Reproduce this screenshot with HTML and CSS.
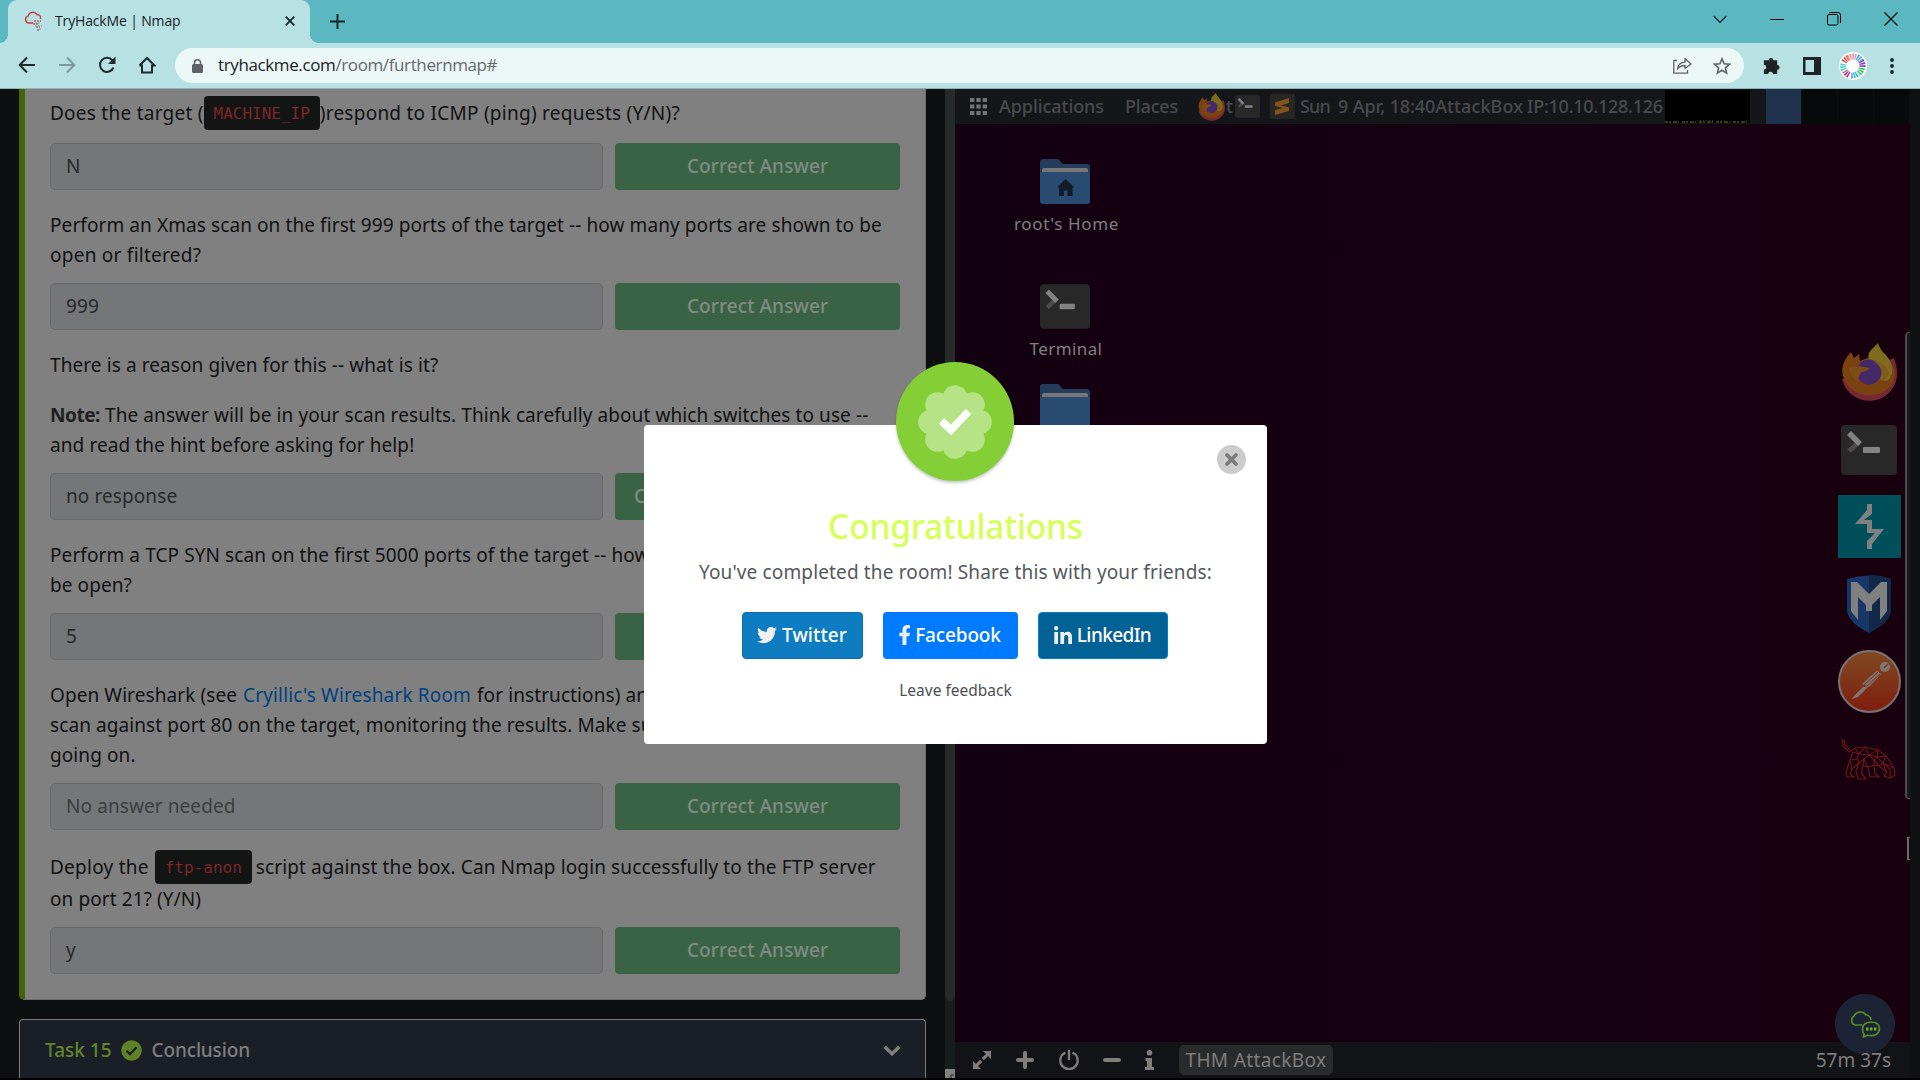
FILE: index.html
```html
<!DOCTYPE html>
<html lang="en">
<head>
<meta charset="utf-8">
<title>TryHackMe | Nmap</title>
<link rel="stylesheet" href="styles.css">
</head>
<body>
<svg class="defs" width="0" height="0">
  <defs>
    <linearGradient id="post" x1="0" y1="0" x2="0" y2="1"><stop offset="0" stop-color="#7f4a22"/><stop offset="1" stop-color="#7f1d0d"/></linearGradient>
    <symbol id="firefox" viewBox="0 0 56 58">
      <path d="M53 15Q57 26 56 34A28 28 0 0 1 1 36Z" fill="#752834"/>
      <path d="M1 27Q2 17 10 9L13 15L18 11L19 18Q39 8 51 21Q57 34 50 43Q39 54 24 52Q3 48 1 27Z" fill="#7a4211"/>
      <path d="M28 17Q26 10 31 6L37 0Q39 7 45 12Q53 21 51 31Q46 43 38 34L36 20Z" fill="#7e6b1c"/>
      <circle cx="28" cy="29" r="12.500" fill="#45286a"/>
      <path d="M32 18Q40 22 41 30Q41 36 38 38Q46 38 48 30Q46 20 32 18Z" fill="#7e5d1a"/>
      <path d="M8 25Q17 22 29 25Q25 29 21 29Q17 32 17 39Q10 35 8 25Z" fill="#7e4d16"/>
    </symbol>
    <symbol id="terminal" viewBox="0 0 56 50">
      <rect width="56" height="50" rx="4" fill="#282828"/>
      <path d="M8 26L17 18" stroke="#4b4b4b" stroke-width="5"/>
      <path d="M8 8L19 19" stroke="#838383" stroke-width="5.500"/>
      <rect x="22" y="22" width="17" height="6" rx="1" fill="#838383"/>
    </symbol>
    <symbol id="folder" viewBox="0 0 50 45">
      <path d="M0 3Q0 0 3 0H17Q19 0 20 2L23 5H47Q50 5 50 8V30H0Z" fill="#243d5d"/>
      <path d="M2 13V11Q2 9 4 9H46Q48 9 48 11V14H2Z" fill="#777"/>
      <path d="M0 13H50V42Q50 45 47 45H3Q0 45 0 42Z" fill="#294b72"/>
    </symbol>
  </defs>
</svg>

<header class="tabs">
  <div class="tab">
    <svg class="favicon" viewBox="0 0 21 21" width="21" height="21"><path d="M9 12H4.500A3.500 3.500 0 0 1 4 5.200A5 5 0 0 1 13 3.500A3.500 3.500 0 0 1 16.500 8" fill="none" stroke="#c8393f" stroke-width="1.400"/><path d="M10 10h7M9 13h5M12 16h4M13 19h3" stroke="#c55a60" stroke-width="1.500" stroke-dasharray="2 1"/><path d="M11 12h6M11 15h7M15 18h3" stroke="#8a8f93" stroke-width="1.200" stroke-dasharray="2 1"/></svg>
    <span class="tab-title">TryHackMe | Nmap</span>
    <svg class="tab-x" viewBox="0 0 10 10" width="10" height="10"><path d="M.7.700l8.600 8.600M9.300.700L.7 9.300" stroke="#16282a" stroke-width="1.800"/></svg>
  </div>
  <svg class="newtab" viewBox="0 0 15 15" width="15" height="15"><path d="M7.500 0v15M0 7.500h15" stroke="#16282a" stroke-width="2"/></svg>
  <div class="winbtns">
    <svg viewBox="0 0 14 14" width="14" height="14"><path d="M.7 4l6.300 6.500L13.300 4" fill="none" stroke="#0c1c1e" stroke-width="1.200"/></svg>
    <svg viewBox="0 0 14 14" width="14" height="14"><path d="M0 7.500h14" stroke="#000" stroke-width="1"/></svg>
    <svg viewBox="0 0 14 14" width="14" height="14"><rect x=".5" y="2.500" width="10.500" height="10.500" rx="1.500" fill="none" stroke="#000"/><path d="M2.500.5H11Q13.500.5 13.500 3V11" fill="none" stroke="#000"/></svg>
    <svg viewBox="0 0 14 14" width="14" height="14"><path d="M.5.500l13 13M13.500.500l-13 13" stroke="#000" stroke-width="1.100"/></svg>
  </div>
</header>

<div class="toolbar">
  <svg class="nav" viewBox="0 0 18 18" width="18" height="18"><path d="M17 9H2M9 1.500L1.700 9L9 16.500" fill="none" stroke="#1d2a2c" stroke-width="2"/></svg>
  <svg class="nav" viewBox="0 0 18 18" width="18" height="18"><path d="M1 9H16M9 1.500L16.300 9L9 16.500" fill="none" stroke="#7c9a9d" stroke-width="2"/></svg>
  <svg class="nav" viewBox="0 0 18 18" width="18" height="18"><path d="M15.500 11.500A7 7 0 1 1 14.500 4.500" fill="none" stroke="#1d2a2c" stroke-width="2"/><path d="M17.500.5V8H10Z" fill="#1d2a2c"/></svg>
  <svg class="nav" viewBox="0 0 18 18" width="18" height="18"><path d="M4 8.500V16.500H14V8.500M1.500 9.500L9 2L16.500 9.500H14M4 9.500H1.500" fill="none" stroke="#1d2a2c" stroke-width="2"/></svg>
  <div class="url">
    <svg class="lock" viewBox="0 0 11 14" width="11" height="14"><rect y="5" width="11" height="9" rx="1.500" fill="#5f6368"/><path d="M2.500 6V3.800a3 3 0 0 1 6 0V6" fill="none" stroke="#5f6368" stroke-width="1.600"/></svg>
    <span class="address">tryhackme.com<span class="path">/room/furthernmap#</span></span>
    <svg class="share" viewBox="0 0 19 17" width="19" height="17"><path d="M4 3.500H.8V16.200H14.500V13" fill="none" stroke="#5f6368" stroke-width="1.300"/><path d="M4.500 12Q5.500 5.500 12 5.200V1.500L18 7L12 11.500V8.500Q7 8.500 4.500 12Z" fill="none" stroke="#5f6368" stroke-width="1.300" stroke-linejoin="round"/></svg>
    <svg viewBox="0 0 18 18" width="18" height="18"><path d="M9 1.800l2.100 5 5.400.4-4.100 3.600 1.200 5.300L9 13.300l-4.600 2.800 1.200-5.300L1.500 7.200l5.400-.4z" fill="none" stroke="#5f6368" stroke-width="1.600"/></svg>
  </div>
  <svg class="puzzle" viewBox="0 0 20 20" width="19" height="19"><path d="M2 4.500H7A2.500 2.500 0 1 1 12 4.500H16V9.500A2.500 2.500 0 1 1 16 14.500V19H11.500A2.500 2.500 0 0 0 6.500 19H2V14.300A2.500 2.500 0 0 0 2 9.300Z" fill="#1d2326"/></svg>
  <svg class="panel" viewBox="0 0 18 18" width="18" height="18"><path d="M0 0H18V18H0ZM2.500 3V15H11V3Z" fill="#1d2326" fill-rule="evenodd"/></svg>
  <svg class="avatar" viewBox="0 0 28 28" width="28" height="28"><circle cx="14" cy="14" r="14" fill="#fff"/><g fill="none" stroke-width="6" stroke-dasharray="1.500 .8"><path d="M9 6A9.500 9.500 0 0 1 17 5" stroke="#eb90a5"/><path d="M18 5A9.500 9.500 0 0 1 22 9" stroke="#4ba5dc"/><path d="M22 9A9.500 9.500 0 0 1 23.500 15" stroke="#7d3cc0"/><path d="M23 16A9.500 9.500 0 0 1 19 22" stroke="#35c46d"/><path d="M18 22A9.500 9.500 0 0 1 12 23.500" stroke="#3bafe0"/><path d="M10 23A9.500 9.500 0 0 1 6 19" stroke="#b13a91"/><path d="M5 18A9.500 9.500 0 0 1 4.500 12" stroke="#47d4c2"/><path d="M5 10A9.500 9.500 0 0 1 9 6" stroke="#dd503d"/></g></svg>
  <svg viewBox="0 0 4 16" width="4" height="16"><circle cx="2" cy="2" r="1.900" fill="#1d2326"/><circle cx="2" cy="8" r="1.900" fill="#1d2326"/><circle cx="2" cy="14" r="1.900" fill="#1d2326"/></svg>
</div>

<main class="split">
  <section class="room">
    <div class="room-body">
      <article class="task">
        <p class="line tall"><span class="loose">Does the target (</span><code>MACHINE_IP</code><span class="loose">)respond to ICMP (ping) requests (Y/N)?</span></p>
        <div class="answer"><div class="field">N</div><div class="correct">Correct Answer</div></div>
        <p class="line">Perform an Xmas scan on the first 999 ports of the target -- how many ports are shown to be</p>
        <p class="line"><span class="loose">open or filtered?</span></p>
        <div class="answer"><div class="field">999</div><div class="correct">Correct Answer</div></div>
        <p class="line para">There is a reason given for this -- what is it?</p>
        <p class="line"><b>Note:</b><span>The answer will be in your scan results. Think carefully about which switches to use --</span></p>
        <p class="line">and read the hint before asking for help!</p>
        <div class="answer"><div class="field">no response</div><div class="correct with-hint">Correct Answer</div></div>
        <p class="line">Perform a TCP SYN scan on the first 5000 ports of the target -- how</p>
        <p class="line">be open?</p>
        <div class="answer"><div class="field">5</div><div class="correct"></div></div>
        <p class="line"><span>Open Wireshark (see</span><a>Cryillic's Wireshark Room</a><span>for instructions) and</span></p>
        <p class="line">scan against port 80 on the target, monitoring the results. Make sure</p>
        <p class="line">going on.</p>
        <div class="answer"><div class="field none">No answer needed</div><div class="correct">Correct Answer</div></div>
        <p class="line tall"><span class="loose">Deploy the</span><code class="ftp">ftp-anon</code><span class="script">script against the box. Can Nmap login successfully to the FTP server</span></p>
        <p class="line">on port 21? (Y/N)</p>
        <div class="answer"><div class="field">y</div><div class="correct">Correct Answer</div></div>
      </article>
      <article class="next">
        <span class="num">Task 15</span>
        <svg class="done" viewBox="0 0 21 21" width="21" height="21"><circle cx="10.500" cy="10.500" r="10.300" fill="#5f8224"/><path d="M5.500 10.700l3.500 3.500 6.500-7" fill="none" stroke="#1a1e27" stroke-width="2.300"/></svg>
        <span class="name">Conclusion</span>
        <svg class="chev" viewBox="0 0 18 11" width="18" height="11"><path d="M1.700 1.700L9 8.800L16.300 1.700" fill="none" stroke="#807f7f" stroke-width="3.400"/></svg>
      </article>
    </div>
    <div class="scroll"><div class="thumb"></div><svg viewBox="0 0 10 9" width="10" height="9"><rect width="10" height="9" fill="#808080"/><path d="M6 9V6H9M4 9h1" stroke="#222" fill="none"/></svg></div>
  </section>

  <section class="vm">
    <div class="gnome">
      <svg class="grid" viewBox="0 0 17 17" width="17" height="17"><path d="M0 2H17M0 8.500H17M0 15H17" stroke="#727476" stroke-width="4.200" stroke-dasharray="4.300 2.050"/></svg>
      <span class="apps">Applications</span><span class="places">Places</span>
      <svg class="ff" width="27" height="28"><use href="#firefox"/></svg><span class="tt">t</span>
      <svg class="tm" width="25" height="23"><use href="#terminal"/></svg>
      <svg class="sub" viewBox="0 0 25 25" width="25" height="25"><rect width="25" height="25" rx="1" fill="#282623"/><path d="M5 8.500L19 4V9L11 11.500L19 13.500V17L5 21V16L13 14L5 12Z" fill="#80531c"/></svg>
      <span class="sun">Sun</span><span class="date">9 Apr, 18:40</span><span class="box">AttackBox</span><span class="ip">IP:10.10.128.126</span>
      <svg class="graph" viewBox="0 0 85 33" width="85" height="33"><rect width="85" height="33" fill="#000"/><path d="M0 32h85" stroke="#2c4312" stroke-width="2" stroke-dasharray="3 1 2 2 4 1 1 3"/><path d="M32 30.500h18M56 30.500h4" stroke="#263d10" stroke-dasharray="1 2"/></svg>
      <div class="workspaces"><i></i><i></i><i></i><i></i></div>
    </div>
    <div class="desktop">
      <div class="shortcuts">
        <svg viewBox="0 0 50 45" width="50" height="45"><use href="#folder"/><path d="M25.500 20L17 28.500H19V37H24V31.500H27.500V37H32.500V28.500H34.500Z" fill="#101c2a"/></svg>
        <span class="home">root's Home</span>
        <svg class="term" width="50" height="45"><use href="#terminal"/></svg>
        <span class="tlabel">Terminal</span>
        <svg class="dir" width="50" height="45"><use href="#folder"/></svg>
      </div>
      <div class="dock">
        <svg width="56" height="58"><use href="#firefox"/></svg>
        <svg class="k2" width="56" height="50"><use href="#terminal"/></svg>
        <svg class="k3" viewBox="0 0 63 63" width="63" height="63"><rect width="63" height="63" fill="#004f5a"/><path d="M29 9H34V19L26 25H34V34H46L34 49V54H29V46L37 38H29V29H17L29 15Z" fill="#7e8182"/></svg>
        <svg class="k4" viewBox="0 0 44 58" width="44" height="58"><path d="M0 4Q22-3 44 4V36Q42 48 22 58Q2 48 0 36Z" fill="#183668"/><path d="M22 0Q35 0 44 4V36Q42 48 22 58Z" fill="#112848"/><path d="M4 7H10L22 19L34 7H40V36L33 45V22L25 30V36H19V30L11 22V45L4 36Z" fill="#808080"/></svg>
        <svg class="k5" viewBox="0 0 63 63" width="63" height="63"><circle cx="31.500" cy="31.500" r="30.500" fill="url(#post)" stroke="#797272" stroke-width="2"/><circle cx="47" cy="17" r="5" fill="#807570"/><path d="M46 18l4-4" stroke="#7b3518" stroke-width="1.200"/><path d="M24 34L39 20.500L43 24L31 37Z" fill="#807570"/><path d="M26 35L40 22M28 37L42 24" stroke="#7b3518" stroke-width="1"/><path d="M31 36L20 47L14 49L16 46L25 37Z" fill="#807570"/></svg>
        <svg class="k6" viewBox="0 0 56 42" width="56" height="42"><g fill="none" stroke="#661719" stroke-width="1.200"><path d="M1 1L2 8L8 14L14 10L24 9L37 12L45 18L53 30L54 37L49 40L43 38L46 34L38 28L33 27L34 35L38 39H29L27 29L22 28L20 35L25 41H17L15 33L18 25L11 31L9 36L13 39H6L5 34L9 22L12 14"/><path d="M3 1L4 7L9 12M14 10L18 16L24 9L28 17L37 12L36 19L45 18L42 25L53 30M12 14L18 16L28 17L36 19L42 25L38 28L33 22L36 19M9 22L16 21L18 16M16 21L18 25L23 21L28 17L33 22L33 27L27 29L23 21L22 28M11 31L9 22M49 40L49 31L42 25L45 34"/></g></svg>
      </div>
      <div class="handle"></div>
      <div class="pointer"></div>
    </div>
    <footer class="controls">
      <svg class="resize" viewBox="0 0 18 18" width="18" height="18"><path d="M2.500 15.500L15.500 2.500" stroke="#807d7a" stroke-width="3" stroke-dasharray="8 2.400"/><path d="M10 0H18V8ZM8 18H0V10Z" fill="#807d7a"/></svg>
      <svg class="add" viewBox="0 0 18 18" width="18" height="18"><path d="M9 2V16M2 9H16" stroke="#807d7a" stroke-width="4" stroke-linecap="round"/></svg>
      <svg class="power" viewBox="0 0 20 20" width="20" height="20"><path d="M6.500 2.500A8.700 8.700 0 1 0 13.500 2.500M10 0V10" fill="none" stroke="#807d7a" stroke-width="2.300"/></svg>
      <svg class="minus" viewBox="0 0 18 18" width="18" height="18"><path d="M2 9H16" stroke="#807d7a" stroke-width="4" stroke-linecap="round"/></svg>
      <svg class="info" viewBox="0 0 9 20" width="9" height="20"><circle cx="4.500" cy="2.800" r="2.800" fill="#807d7a"/><path d="M.5 8H7V17H9V20H0V17H2V11H.5Z" fill="#807d7a"/></svg>
      <span class="vmname">THM AttackBox</span>
      <span class="timer">57m 37s</span>
    </footer>
    <div class="chat"><svg viewBox="0 0 32 28" width="32" height="28"><g fill="none" stroke="#598f1e" stroke-width="1.600"><path d="M13 15H6A5 5 0 0 1 5 6A7 7 0 0 1 17 5A5 5 0 0 1 22 10"/><path d="M15 24.500L14.500 27L18 25.300Q30 27 30.500 18.500Q30 12 22 12Q14 12.500 13.500 18.500Q13.500 22 15 24.500Z"/></g><path d="M17 19H28" stroke="#70b524" stroke-width="3" stroke-dasharray="2.500 1.500"/></svg></div>
  </section>
  <div class="edge"></div>
</main>

<div class="modal">
  <div class="seal"><svg viewBox="0 0 74 74" width="74" height="74"><g fill="#b5e385"><circle cx="37" cy="37" r="27"/><circle cx="37" cy="12.500" r="12.300"/><circle cx="37" cy="61.500" r="12.300"/><circle cx="12.500" cy="37" r="12.300"/><circle cx="61.500" cy="37" r="12.300"/><circle cx="19.500" cy="19.500" r="12.300"/><circle cx="54.500" cy="19.500" r="12.300"/><circle cx="19.500" cy="54.500" r="12.300"/><circle cx="54.500" cy="54.500" r="12.300"/></g><path d="M23.500 36L33 45L50.500 26.500" fill="none" stroke="#fff" stroke-width="7.500"/></svg></div>
  <svg class="close" viewBox="0 0 29 29" width="29" height="29"><circle cx="14.500" cy="14.500" r="14.500" fill="#ccc"/><path d="M10 10l9 9M19 10l-9 9" stroke="#7b7b7b" stroke-width="3.800" stroke-linecap="round"/></svg>
  <h2>Congratulations</h2>
  <p class="msg">You've completed the room! Share this with your friends:</p>
  <div class="social">
    <div class="tw"><svg viewBox="0 0 512 512" width="20" height="20"><path fill="#f0f0f0" d="M459.370 151.716c.325 4.548.325 9.097.325 13.645 0 138.720-105.583 298.558-298.558 298.558-59.452 0-114.680-17.219-161.137-47.106 8.447.974 16.568 1.299 25.340 1.299 49.055 0 94.213-16.568 130.274-44.832-46.132-.975-84.792-31.188-98.112-72.772 6.498.974 12.995 1.624 19.818 1.624 9.421 0 18.843-1.300 27.614-3.573-48.081-9.747-84.143-51.980-84.143-102.985v-1.299c13.969 7.797 30.214 12.670 47.431 13.319-28.264-18.843-46.781-51.005-46.781-87.391 0-19.492 5.197-37.360 14.294-52.954 51.655 63.675 129.300 105.258 216.365 109.807-1.624-7.797-2.599-15.918-2.599-24.040 0-57.828 46.782-104.934 104.934-104.934 30.213 0 57.502 12.670 76.670 33.137 23.715-4.548 46.456-13.320 66.599-25.340-7.798 24.366-24.366 44.833-46.132 57.827 21.117-2.273 41.584-8.122 60.426-16.243-14.292 20.791-32.161 39.308-52.628 54.253z"/></svg><span>Twitter</span></div>
    <div class="fb"><svg viewBox="22 0 266 512" width="11" height="20"><path fill="#f0f0f0" d="M279.140 288l14.220-92.660h-88.910v-60.130c0-25.350 12.420-50.060 52.240-50.060h40.420V6.260S260.430 0 225.360 0c-73.220 0-121.080 44.380-121.080 124.720v70.620H22.890V288h81.390v224h100.170V288z"/></svg><span>Facebook</span></div>
    <div class="li"><svg viewBox="0 32 448 448" width="18" height="18"><path fill="#f0f0f0" d="M100.280 480H7.400V180.900h92.880zM53.790 140.100C24.090 140.100 0 115.500 0 85.800a53.790 53.790 0 0 1 107.580 0c0 29.700-24.100 54.300-53.790 54.300zM447.900 480h-92.680V334.400c0-34.700-.7-79.200-48.290-79.200-48.290 0-55.690 37.700-55.690 76.700V480h-92.780V180.900h89.080v40.800h1.300c12.400-23.500 42.690-48.300 87.880-48.300 94 0 111.280 61.900 111.280 142.300V480z"/></svg><span>LinkedIn</span></div>
  </div>
  <p class="feedback">Leave feedback</p>
</div>
</body>
</html>
```
FILE: styles.css
```css
* { box-sizing: border-box; }
body { margin: 0; width: 1920px; height: 1080px; overflow: hidden; background: #000; display: flex; flex-direction: column; position: relative; font: 19px/30px "Noto Sans", sans-serif; white-space: nowrap; }
svg { display: block; flex: none; }
span, a, code, b { flex: none; }
p, h2 { margin: 0; }
.defs { position: absolute; }

/* browser frame */
.tabs { height: 43px; flex: none; background: #5bb8c1; display: flex; align-items: center; }
.tab { position: relative; width: 302px; height: 43px; margin-left: 8px; padding: 0 15px 1px 16px; background: #b8e1e4; border-radius: 9px 9px 0 0; display: flex; align-items: center; }
.tab::before, .tab::after { content: ""; position: absolute; bottom: 0; width: 8px; height: 8px; }
.tab::before { left: -8px; background: radial-gradient(circle at 0 0, transparent 7.5px, #b8e1e4 8px); }
.tab::after { right: -8px; background: radial-gradient(circle at 100% 0, transparent 7.5px, #b8e1e4 8px); }
.tab-title { margin-left: 10px; padding-bottom: 1px; font: 14px/20px "Open Sans", sans-serif; letter-spacing: -.15px; color: #172224; }
.tab-x { margin-left: auto; }
.newtab { margin-left: 20px; }
.winbtns { margin: 0 22px 6px auto; display: flex; gap: 43px; }
.toolbar { height: 46px; flex: none; background: #b8e1e4; border-bottom: 1px solid #8db4b7; display: flex; align-items: center; padding: 0 26px 0 18px; }
.nav { margin: 0 22px 1px 0; }
.url { width: 1569px; height: 35px; flex: none; margin-left: -3px; padding: 0 13px 0 17px; border-radius: 18px; background: #ecf8f8; display: flex; align-items: center; }
.address { margin-left: 15px; padding-bottom: 1px; font: 17px/24px "Open Sans", sans-serif; letter-spacing: -.38px; color: #1b2224; }
.path { color: #65696d; }
.share { margin: 0 21px 0 auto; }
.puzzle { margin-left: 18px; }
.panel { margin-left: 22px; }
.avatar { margin: 0 23px 0 18px; }

.split { height: 989px; display: flex; background: #0e0f11; }

/* room tasks */
.room { width: 955px; display: flex; color: #101112; }
.room-body { width: 945px; padding-left: 19px; background: #0e0f11; }
.task { width: 907px; height: 911px; padding: 7px 25px 0 25px; border: 1px solid #6d6e70; border-width: 0 1px 1px 0; border-left: 6px solid #456409; border-radius: 0 0 5px 5px; background: #808080; letter-spacing: .09px; }
.line { display: flex; height: 30px; align-items: center; }
.line.tall { height: 34px; }
.line.para { margin-bottom: 20px; }
.loose { letter-spacing: .25px; }
.script { letter-spacing: .12px; }
.line b { margin-right: 5px; font-weight: 700; letter-spacing: -.45px; color: #1d1f21; }
.line a { color: #003f80; margin: 0 6px 0 6px; letter-spacing: .15px; }
code { height: 34px; width: 116px; border-radius: 4px; background: #131514; color: #7c2629; font: 16px/35px "DejaVu Sans Mono", monospace; letter-spacing: 0; text-align: center; }
.ftp { width: 97px; margin: 0 4px 0 6px; }
.answer { display: flex; gap: 12px; height: 47px; margin: 13px 0 20px; }
.field { width: 553px; flex: none; border: 1px solid #67696b; border-radius: 5px; background: #757678; color: #27292b; padding-left: 15px; line-height: 45px; }
.field.none { color: #3b3e41; }
.correct { width: 285px; flex: none; border-radius: 4px; background: #3a6345; color: #808c83; line-height: 46px; letter-spacing: .1px; text-align: center; font-weight: 500; }
.with-hint { width: 179px; }
.next { width: 907px; height: 59px; margin-top: 19px; padding: 2px 24px 0 25px; border: 1px solid #77797b; border-bottom: 0; border-radius: 4px 4px 0 0; background: #1a1e27; display: flex; align-items: center; }
.num { color: #628627; font-weight: 500; }
.name { color: #807e7e; font-weight: 500; letter-spacing: -.15px; }
.done { margin: 0 10px 0 9px; }
.chev { margin-left: auto; }
.scroll { width: 10px; background: #171c1c; display: flex; flex-direction: column; justify-content: space-between; }
.thumb { height: 912px; background: #252a2b; border-radius: 0 0 5px 5px; }

/* remote machine */
.vm { width: 955px; position: relative; display: flex; flex-direction: column; }
.gnome { height: 35px; background: #15161a; display: flex; align-items: center; padding-left: 15px; color: #484a4d; font-size: 18px; font-weight: 500; }
.gnome span { padding-bottom: 2px; }
.apps { margin-left: 12px; letter-spacing: -.06px; }
.places { margin-left: 21px; letter-spacing: -.18px; }
.ff { margin-left: 20px; }
.tt { width: 10px; padding-left: 1px; }
.sub { margin: 0 5px 0 10px; }
.sun { letter-spacing: -.8px; }
.date { margin-left: 8px; letter-spacing: -.1px; }
.box { letter-spacing: .1px; }
.ip { margin-left: 4px; letter-spacing: -.26px; }
.graph { margin: 0 16px 0 auto; }
.workspaces { display: flex; flex: none; height: 35px; background: #08090b; }
.workspaces i { width: 36px; border-right: 1px solid #0d0e11; }
.workspaces i:first-child { background: #1e324e; }
.desktop { height: 918px; position: relative; display: flex; justify-content: space-between; background: linear-gradient(90deg, #130010, #160010 50%, #19000f); }
.shortcuts { width: 220px; padding-top: 35px; display: flex; flex-direction: column; align-items: center; color: #807f80; font-size: 17px; line-height: 24px; }
.home { margin: 8px 0 0 3px; letter-spacing: .64px; }
.term { margin-top: 48px; }
.tlabel { margin: 8px 0 0 2px; letter-spacing: .4px; }
.dir { margin-top: 23px; }
.dock { width: 82px; padding-top: 219px; display: flex; flex-direction: column; align-items: center; }
.k2 { margin-top: 24px; }
.k3 { margin-top: 20px; }
.k4 { margin-top: 17px; }
.k5 { margin-top: 17px; }
.k6 { margin-top: 25px; }
.handle { position: absolute; right: 0; top: 208px; width: 5px; height: 467px; background: #1b1a1b; border: 1px solid #4b4a4b; border-right: 0; border-left-width: 2px; border-radius: 4px 0 0 4px; }
.pointer { position: absolute; right: 0; top: 713px; width: 3px; height: 23px; border: 2px solid #6d6a6c; border-width: 1px 0 1px 2px; }
.controls { height: 36px; background: #111316; display: flex; align-items: center; padding: 0 19px 0 18px; color: #807d7a; }
.add { margin-left: 25px; }
.power { margin-left: 25px; }
.minus { margin-left: 24px; }
.info { margin-left: 24px; }
.vmname { width: 154px; height: 30px; margin-left: 25px; border-radius: 5px; background: #272b2c; text-align: center; letter-spacing: .38px; }
.timer { margin-left: auto; position: relative; z-index: 1; }
.chat { position: absolute; left: 880px; top: 905px; width: 60px; height: 60px; border-radius: 50%; background: #1b2334; display: flex; align-items: center; justify-content: center; }
.edge { width: 10px; background: #0e1011; }

/* completion dialog */
.modal { position: absolute; left: 644px; top: 425px; width: 623px; height: 319px; padding-top: 77px; background: #fff; border-radius: 4px; display: flex; flex-direction: column; align-items: center; }
.seal { position: absolute; left: 252px; top: -63px; width: 118px; height: 119px; border-radius: 50%; background: #84cf35; box-shadow: 0 2px 3px rgba(0,0,0,.22); display: flex; align-items: center; justify-content: center; }
.close { position: absolute; right: 21px; top: 20px; }
h2 { color: #d6ff57; font-size: 33.500px; line-height: 48px; font-weight: 500; letter-spacing: -.2px; }
.msg { margin-top: 7px; color: #54585c; letter-spacing: .14px; }
.social { display: flex; gap: 20px; margin: 25px 2px 0 0; }
.social div { height: 47px; border-radius: 4px; display: flex; align-items: center; justify-content: center; gap: 5px; color: #fff; font-weight: 500; padding-bottom: 2px; }
.social .tw { width: 121px; background: #0d7cc0; border: 1px solid #0a6ea9; letter-spacing: .1px; }
.social .fb { width: 135px; background: #007bff; letter-spacing: -.15px; }
.social .li { width: 130px; background: #026195; border: 1px solid #0081c5; letter-spacing: -.6px; }
.feedback { margin-top: 16px; color: #4d4f52; font-size: 15.500px; }
```
